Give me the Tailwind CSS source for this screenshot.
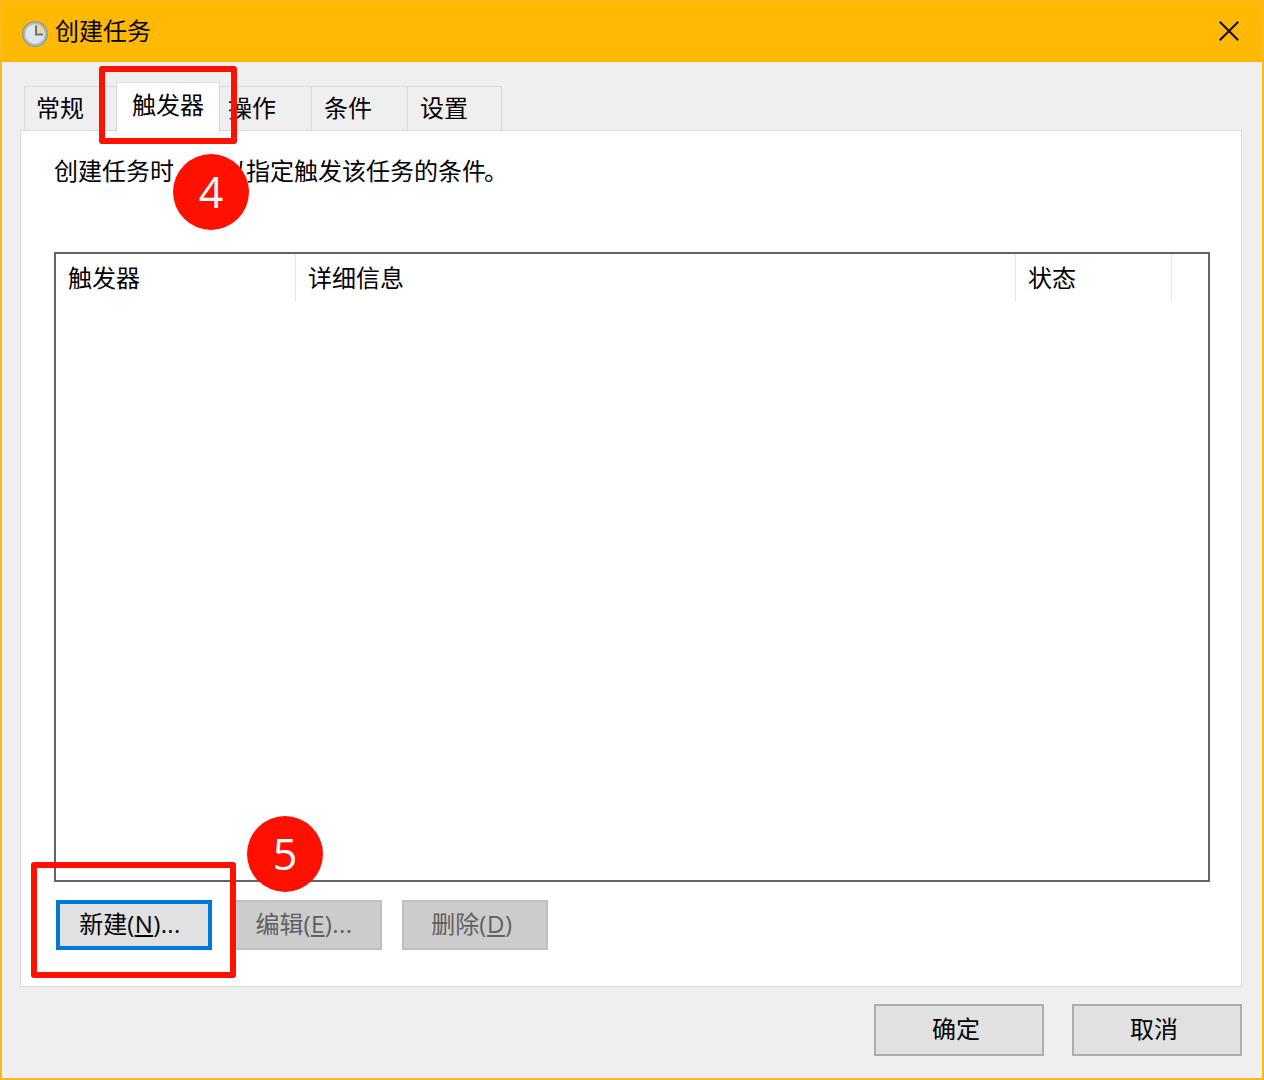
<!DOCTYPE html>
<html lang="zh-CN">
<head>
<meta charset="utf-8">
<title>创建任务</title>
<script src="https://cdn.jsdelivr.net/npm/@tailwindcss/browser@4"></script>
</head>
<body class="font-['Open_Sans','Noto_Sans_CJK_SC',sans-serif] text-2xl leading-8 text-black">
<div class="relative flex h-[1080px] w-[1264px] flex-col overflow-hidden border-2 border-[#fdbb18] bg-[#efefef]">
  <header class="flex h-[60px] shrink-0 items-center bg-[#ffb903] pr-[23px] pb-0.5 pl-[19px]">
    <svg class="mt-1.5 h-7 w-7" viewBox="0 0 28 28">
      <circle cx="14" cy="14" r="12" fill="#dfe7ec" stroke="#a39a78" stroke-width="2"/>
      <circle cx="14" cy="14" r="10.600" fill="none" stroke="#a9bfce" stroke-width="1.800"/>
      <path d="M15 14V4.500A9.400 9.400 0 0 1 23.400 14Z" fill="#f3d795"/>
      <path d="M15 5.500V14.500H22" fill="none" stroke="#68747d" stroke-width="2"/>
    </svg>
    <h1 class="ml-1.5">创建任务</h1>
    <svg class="ml-auto h-5 w-5" viewBox="0 0 20 20"><path d="M.7 .7 19.300 19.300M19.300 .7 .7 19.300" stroke="#111" stroke-width="2.100"/></svg>
  </header>

  <nav class="relative z-10 mt-5 ml-[22px] flex h-[49px] shrink-0 items-end">
    <div class="mb-px flex h-11 w-[92px] items-center border-t border-l border-[#d9d9d9] pb-0.5 pl-[11px]">常规</div>
    <div class="-mb-0.5 flex h-[51px] w-[104px] items-center border border-b-0 border-[#d9d9d9] bg-white pb-[7px] pl-[15px]">触发器</div>
    <div class="mb-px flex h-11 w-[91px] items-center border-t border-[#d9d9d9] pb-0.5 pl-2">操作</div>
    <div class="mb-px flex h-11 w-24 items-center border-t border-l border-[#d9d9d9] pb-0.5 pl-3">条件</div>
    <div class="mb-px flex h-11 w-[95px] items-center border border-b-0 border-[#d9d9d9] pb-0.5 pl-3">设置</div>
  </nav>

  <main class="-mt-px ml-[18px] flex h-[857px] w-[1222px] shrink-0 flex-col border border-[#d9d9d9] bg-white px-[33px] pt-6">
    <p>创建任务时，可以指定触发该任务的条件<span class="-ml-0.5">。</span></p>
    <section class="mt-[65px] h-[630px] w-[1156px] border-2 border-[#646464]">
      <div class="flex h-12">
        <div class="w-60 border-r border-[#e5e5e5] pt-2 pl-3">触发器</div>
        <div class="w-[720px] border-r border-[#e5e5e5] pt-2 pl-3">详细信息</div>
        <div class="w-[156px] border-r border-[#e5e5e5] pt-2 pl-3">状态</div>
      </div>
    </section>
    <div class="mt-[18px] ml-[2px] flex gap-5">
      <button class="h-[50px] w-[156px] border-4 border-[#0078d7] bg-[#e1e1e1] pr-2 pb-0.5">新建<span class="tracking-[.4px]">(<span class="underline decoration-2 underline-offset-2">N</span>)...</span></button>
      <button class="h-[50px] w-[150px] border-2 border-[#bfbfbf] bg-[#ccc] pr-1.5 pb-0.5 text-[#606060]">编辑<span class="tracking-[.4px]">(<span class="underline decoration-2 underline-offset-2">E</span>)...</span></button>
      <button class="h-[50px] w-[146px] border-2 border-[#bfbfbf] bg-[#ccc] pr-1.5 pb-0.5 text-[#606060]">删除<span class="tracking-[.6px]">(<span class="underline decoration-2 underline-offset-2">D</span>)</span></button>
    </div>
  </main>

  <footer class="mt-[17px] mr-5 flex justify-end gap-7">
    <button class="h-[52px] w-[170px] border-2 border-[#adadad] bg-[#e1e1e1] pr-1.5 pb-0.5">确定</button>
    <button class="h-[52px] w-[170px] border-2 border-[#adadad] bg-[#e1e1e1] pr-1.5 pb-0.5">取消</button>
  </footer>

  <!-- step callouts -->
  <div class="absolute top-16 left-[97px] z-20 h-[78px] w-[138px] rounded-[3px] border-6 border-[#ff1000]"></div>
  <div class="absolute top-[152px] left-[171px] z-20 flex h-[76px] w-[76px] items-center justify-center rounded-full bg-[#ff1000] text-[43px] text-white">4</div>
  <div class="absolute top-[860px] left-[29px] z-20 h-[116px] w-[205px] rounded-[3px] border-6 border-[#ff1000]"></div>
  <div class="absolute top-[814px] left-[245px] z-20 flex h-[76px] w-[76px] items-center justify-center rounded-full bg-[#ff1000] text-[43px] text-white">5</div>
</div>
</body>
</html>
